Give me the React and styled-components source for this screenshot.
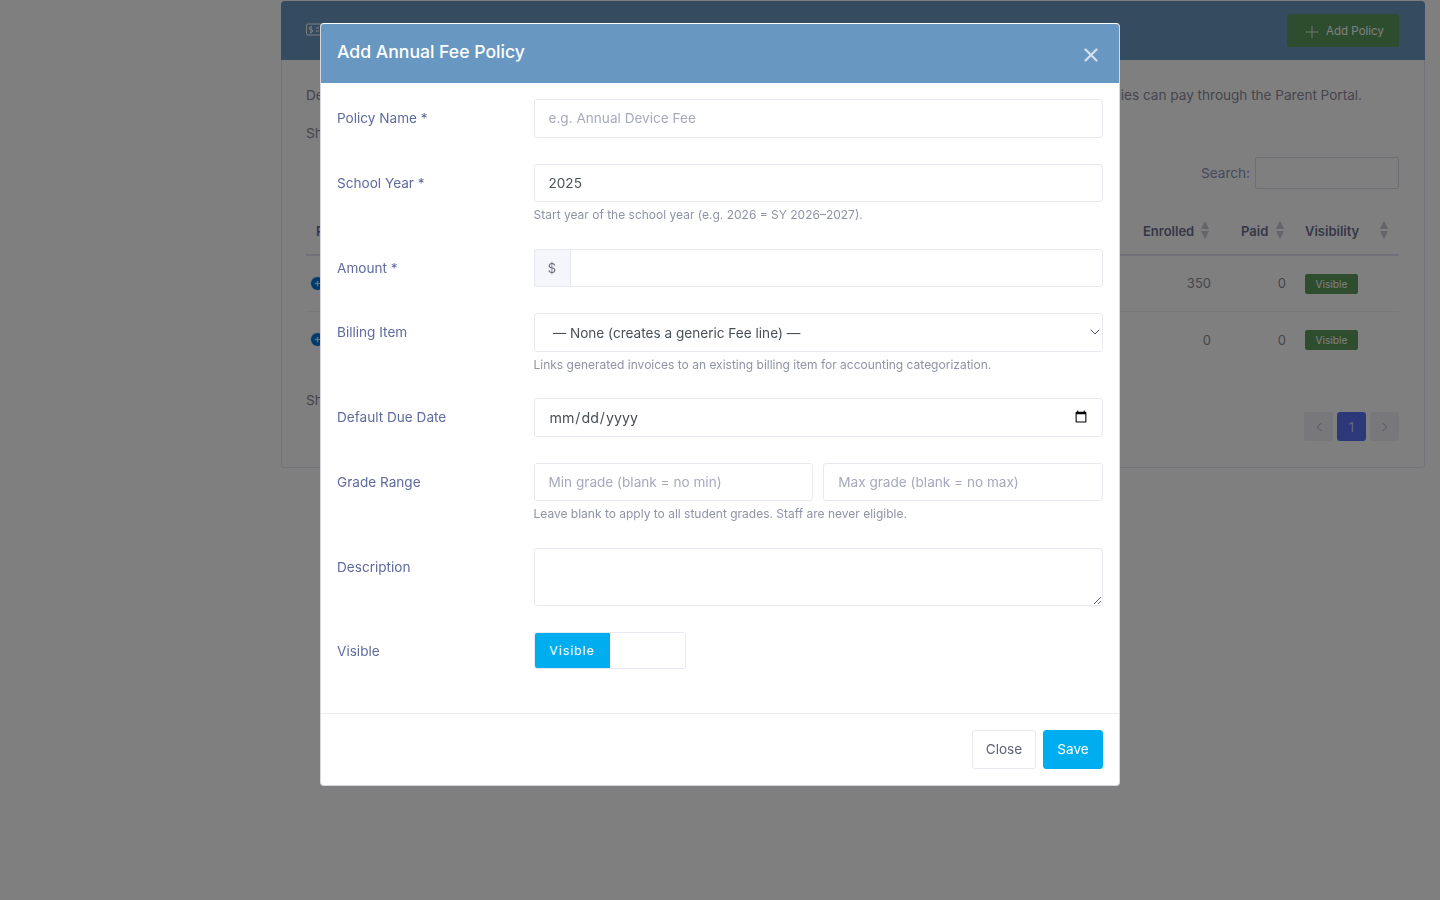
import React from "react";
import styled, { createGlobalStyle } from "styled-components";
import { ChevronDown, ChevronLeft, ChevronRight, Plus, X } from "lucide-react";

const GlobalStyle = createGlobalStyle`
  * { box-sizing: border-box; }
  html, body { margin: 0; height: 100%; overflow: hidden; }
  body {
    background: #fff;
    color: #8c8c98;
    font-family: Inter, "Noto Sans", "Liberation Sans", sans-serif;
    font-size: 13.6px;
  }
`;

const Page = styled.div`
  height: 900px;
  padding: 1px 15px 0 281px;
`;

const Card = styled.section`
  height: 467px;
  border: 1px solid #e6e6f2;
  border-top: 0;
  border-radius: 4px;
`;

const CardHeader = styled.header`
  height: 59px;
  margin: 0 -1px;
  padding: 13px 26px 0 25px;
  display: flex;
  justify-content: space-between;
  align-items: flex-start;
  background: #6897c1;
  border-radius: 4px 4px 0 0;
`;

const HeaderIcon = styled.span`
  margin-top: 9px;
  display: flex;
`;

const AddButton = styled.button`
  width: 112px;
  height: 33px;
  display: flex;
  align-items: center;
  justify-content: center;
  gap: 4px;
  padding: 0;
  border: 0;
  border-radius: 2px;
  background: #5c9a5e;
  color: #fff;
  font: inherit;
  font-size: 11.5px;
  svg { margin-top: 2px; }
`;

const CardBody = styled.div`
  padding: 27px 25px 0 24px;
`;

const Intro = styled.p`
  margin: 0 0 17px;
  white-space: nowrap;
  font-size: 13.6px;
  letter-spacing: -0.02px;
  line-height: 17px;
`;

const LengthRow = styled.div`
  height: 24px;
  display: flex;
  align-items: center;
`;

const SearchRow = styled.div`
  margin-top: 12px;
  display: flex;
  justify-content: flex-end;
  align-items: center;
  gap: 5px;
  color: #8890c0;
`;

const SearchBox = styled.div`
  width: 144px;
  height: 32px;
  border: 1px solid #dcdcea;
  border-radius: 2px;
`;

const TableGrid = styled.div`
  margin-top: 9px;
  display: grid;
  grid-template-columns: 1fr 98px 64px 94px;
  font-size: 13px;
`;

const HeadCell = styled.div`
  height: 58px;
  padding: 0 ${(p) => p.$pad || 0}px 15px ${(p) => p.$left || 0}px;
  display: flex;
  align-items: flex-end;
  justify-content: space-between;
  font-weight: 600;
  color: #6a6f90;
  border-bottom: 2px solid #e3e3f2;
`;

const Cell = styled.div`
  height: 56px;
  padding-right: ${(p) => p.$pad || 0}px;
  padding-bottom: 1px;
  display: flex;
  align-items: center;
  justify-content: ${(p) => (p.$end ? "flex-end" : "flex-start")};
  border-bottom: ${(p) => (p.$last ? "0" : "1px solid #f0f0f6")};
`;

const ExpandDot = styled.span`
  width: 15px;
  height: 15px;
  margin-left: 4px;
  display: flex;
  align-items: center;
  justify-content: center;
  border: 1px solid #fff;
  border-radius: 50%;
  background: #0275d8;
  color: #fff;
  font-size: 11px;
  line-height: 1;
`;

const Badge = styled.span`
  width: 53px;
  height: 20px;
  margin-top: 1px;
  display: flex;
  align-items: center;
  justify-content: center;
  border-radius: 2px;
  background: #5c9a5e;
  color: #fff;
  font-size: 10.2px;
`;

const PagerRow = styled.div`
  margin-top: 24px;
  display: flex;
  justify-content: space-between;
  align-items: flex-start;
`;

const Pager = styled.div`
  margin-top: 20px;
  display: flex;
  gap: 4px;
`;

const PageButton = styled.span`
  width: 29px;
  height: 29px;
  display: flex;
  align-items: center;
  justify-content: center;
  border-radius: 3px;
  background: ${(p) => (p.$active ? "#5a70f4" : "#f0f0f6")};
  color: ${(p) => (p.$active ? "#c8d0ff" : "#7b7f92")};
  font-size: 13px;
`;

const Backdrop = styled.div`
  position: fixed;
  inset: 0;
  background: rgba(0, 0, 0, 0.5);
  display: flex;
  justify-content: center;
  align-items: flex-start;
  padding-top: 23px;
`;

const Modal = styled.div`
  width: 800px;
  height: 763px;
  display: flex;
  flex-direction: column;
  background: #fff;
  border: 1px solid #d6d6de;
  border-top-color: #fff;
  border-radius: 4px;
  overflow: hidden;
`;

const ModalHeader = styled.header`
  height: 58.5px;
  flex: none;
  padding: 0 16px 3px;
  display: flex;
  align-items: center;
  justify-content: space-between;
  background: #6897c1;
`;

const ModalTitle = styled.h5`
  margin: 0;
  color: #fff;
  font-size: 17.6px;
  font-weight: 500;
`;

const CloseIcon = styled.button`
  display: flex;
  padding: 0;
  margin: 6.5px 1px 0 0;
  border: 0;
  background: none;
  color: #d3e0ec;
`;

const ModalBody = styled.div`
  flex: 1;
  padding: 16.5px 16px 0;
`;

const FormRow = styled.div`
  display: grid;
  grid-template-columns: 196.5px 1fr;
  margin-bottom: 26px;
`;

const Label = styled.label`
  height: 38.6px;
  display: flex;
  align-items: center;
  color: #5f6a9e;
  font-size: 13.6px;
`;

const fieldStyle = `
  width: 100%;
  height: 38.6px;
  padding: 0 14px;
  border: 1px solid #e8e8f0;
  border-radius: 3px;
  background: #fff;
  color: #495057;
  font-family: inherit;
  font-size: 13.6px;
  outline: none;
  &::placeholder { color: #a6a9be; }
`;

const Input = styled.input`
  ${fieldStyle}
`;

const DateInput = styled(Input)`
  padding-right: 13px;
  font-size: 14.2px;
  &::-webkit-calendar-picker-indicator { margin-right: -1px; }
`;

const SelectWrap = styled.div`
  position: relative;
  color: #3f434d;
  svg {
    position: absolute;
    top: 11px;
    right: 0;
    pointer-events: none;
  }
`;

const Select = styled.select`
  ${fieldStyle}
  appearance: none;
  padding: 1px 14px 0 18px;
`;

const TextArea = styled.textarea`
  ${fieldStyle}
  display: block;
  height: 58px;
  padding-top: 8px;
`;

const Help = styled.small`
  display: block;
  margin-top: 6px;
  color: #8f93a6;
  font-size: 12px;
  line-height: 14.4px;
`;

const InputGroup = styled.div`
  display: flex;
`;

const Addon = styled.span`
  width: 36px;
  height: 38.6px;
  flex: none;
  display: flex;
  align-items: center;
  justify-content: center;
  border: 1px solid #e8e8f0;
  border-right: 0;
  border-radius: 3px 0 0 3px;
  background: #f5f6fb;
  color: #6b7080;
  font-size: 13px;
`;

const GroupedInput = styled(Input)`
  border-radius: 0 3px 3px 0;
`;

const TwoCols = styled.div`
  display: grid;
  grid-template-columns: 1fr 1fr;
  gap: 10px;
`;

const ToggleWrap = styled.div`
  height: 38.6px;
`;

const Toggle = styled.div`
  width: 152px;
  height: 37px;
  display: flex;
  border: 1px solid #e8e8f0;
  border-radius: 3px;
  overflow: hidden;
`;

const ToggleOn = styled.span`
  width: 75px;
  display: flex;
  align-items: center;
  justify-content: center;
  background: #00aeef;
  color: #fff;
  font-size: 12.2px;
  letter-spacing: 1px;
`;

const ModalFooter = styled.footer`
  height: 72px;
  flex: none;
  padding: 16px;
  display: flex;
  justify-content: flex-end;
  gap: 7px;
  border-top: 1px solid #ebebf2;
`;

const FooterButton = styled.button`
  height: 38.6px;
  padding: 0;
  width: ${(p) => (p.$primary ? "60px" : "64px")};
  border: 1px solid ${(p) => (p.$primary ? "#00aeef" : "#e8e8f0")};
  border-radius: 3px;
  background: ${(p) => (p.$primary ? "#00aeef" : "#fff")};
  color: ${(p) => (p.$primary ? "#fff" : "#5d6278")};
  font-family: inherit;
  font-size: 13.6px;
`;

function SortArrows() {
  return (
    <svg width="10" height="18" viewBox="0 0 10 18" fill="#c8c8d4">
      <path d="M5 0l4 8H1z" />
      <path d="M5 18l4-8H1z" />
    </svg>
  );
}

function FeeIcon() {
  return (
    <svg width="20" height="16" viewBox="0 0 20 16" fill="none" stroke="#fff" strokeWidth="1">
      <path d="M14 12H2a1.5 1.5 0 0 1-1.5-1.5v-8A1.5 1.5 0 0 1 2 1h12a1.5 1.5 0 0 1 1.5 1.5V8" />
      <path d="M10 5h3M10 8h3M6 4H4.5a1.2 1.2 0 0 0 0 2.6h1a1.2 1.2 0 0 1 0 2.6H4M5 3v7.5" />
    </svg>
  );
}

function PoliciesCard() {
  return (
    <Page>
      <Card>
        <CardHeader>
          <HeaderIcon>
            <FeeIcon />
          </HeaderIcon>
          <AddButton>
            <Plus size={20} strokeWidth={1} />
            Add Policy
          </AddButton>
        </CardHeader>
        <CardBody>
          <Intro>
            Define annual fee policies for each school year, set the amount and the eligible grades, and then publish just the ones that families can pay through the Parent Portal.
          </Intro>
          <LengthRow>Show entries</LengthRow>
          <SearchRow>
            Search:
            <SearchBox />
          </SearchRow>
          <TableGrid>
            <HeadCell $left={10}>Policy</HeadCell>
            <HeadCell $pad={31}>Enrolled <SortArrows /></HeadCell>
            <HeadCell $pad={20}>Paid <SortArrows /></HeadCell>
            <HeadCell $pad={10}>Visibility <SortArrows /></HeadCell>

            <Cell><ExpandDot>+</ExpandDot></Cell>
            <Cell $end $pad={30}>350</Cell>
            <Cell $end $pad={19}>0</Cell>
            <Cell><Badge>Visible</Badge></Cell>

            <Cell $last><ExpandDot>+</ExpandDot></Cell>
            <Cell $end $last $pad={30}>0</Cell>
            <Cell $end $last $pad={19}>0</Cell>
            <Cell $last><Badge>Visible</Badge></Cell>
          </TableGrid>
          <PagerRow>
            Showing 1 to 2 of 2 entries
            <Pager>
              <PageButton><ChevronLeft size={14} strokeWidth={1} /></PageButton>
              <PageButton $active>1</PageButton>
              <PageButton><ChevronRight size={14} strokeWidth={1} /></PageButton>
            </Pager>
          </PagerRow>
        </CardBody>
      </Card>
    </Page>
  );
}

export default function App() {
  return (
    <>
      <GlobalStyle />
      <PoliciesCard />
      <Backdrop>
        <Modal>
          <ModalHeader>
            <ModalTitle>Add Annual Fee Policy</ModalTitle>
            <CloseIcon aria-label="Close">
              <X size={22} strokeWidth={2.5} />
            </CloseIcon>
          </ModalHeader>
          <ModalBody>
            <FormRow>
              <Label>Policy Name *</Label>
              <Input placeholder="e.g. Annual Device Fee" />
            </FormRow>
            <FormRow>
              <Label>School Year *</Label>
              <div>
                <Input defaultValue="2025" />
                <Help>Start year of the school year (e.g. 2026 = SY 2026–2027).</Help>
              </div>
            </FormRow>
            <FormRow>
              <Label>Amount *</Label>
              <InputGroup>
                <Addon>$</Addon>
                <GroupedInput />
              </InputGroup>
            </FormRow>
            <FormRow>
              <Label>Billing Item</Label>
              <div>
                <SelectWrap>
                  <Select defaultValue="">
                    <option value="">— None (creates a generic Fee line) —</option>
                  </Select>
                  <ChevronDown size={16} strokeWidth={1.4} />
                </SelectWrap>
                <Help>Links generated invoices to an existing billing item for accounting categorization.</Help>
              </div>
            </FormRow>
            <FormRow>
              <Label>Default Due Date</Label>
              <DateInput type="date" />
            </FormRow>
            <FormRow>
              <Label>Grade Range</Label>
              <div>
                <TwoCols>
                  <Input placeholder="Min grade (blank = no min)" />
                  <Input placeholder="Max grade (blank = no max)" />
                </TwoCols>
                <Help>Leave blank to apply to all student grades. Staff are never eligible.</Help>
              </div>
            </FormRow>
            <FormRow>
              <Label>Description</Label>
              <TextArea />
            </FormRow>
            <FormRow>
              <Label>Visible</Label>
              <ToggleWrap>
                <Toggle>
                  <ToggleOn>Visible</ToggleOn>
                </Toggle>
              </ToggleWrap>
            </FormRow>
          </ModalBody>
          <ModalFooter>
            <FooterButton>Close</FooterButton>
            <FooterButton $primary>Save</FooterButton>
          </ModalFooter>
        </Modal>
      </Backdrop>
    </>
  );
}
